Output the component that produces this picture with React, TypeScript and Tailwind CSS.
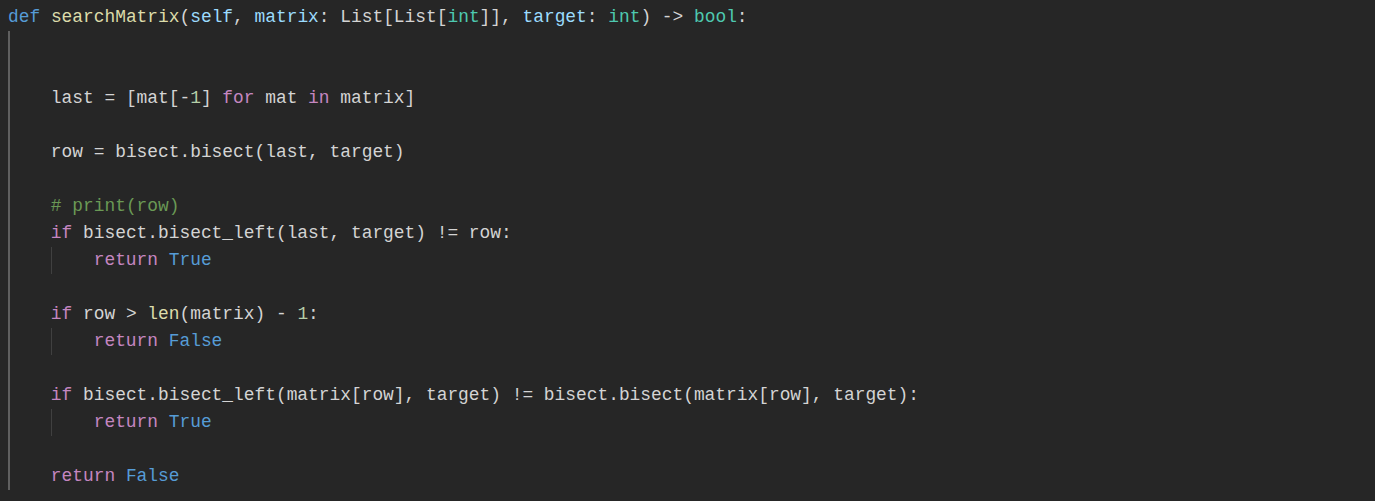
import React from 'react'

type Tok = [string, string]

const C = {
  txt: 'text-[#d4d4d4]',
  kw: 'text-[#c586c0]',
  blue: 'text-[#569cd6]',
  fn: 'text-[#dcdcaa]',
  param: 'text-[#9cdcfe]',
  type: 'text-[#4ec9b0]',
  num: 'text-[#b5cea8]',
  cmt: 'text-[#6a9955]',
}

// indent = number of 4-space levels before the tokens
const lines: { indent: number; toks: Tok[] }[] = [
  {
    indent: 0,
    toks: [
      ['def', C.blue],
      [' ', C.txt],
      ['searchMatrix', C.fn],
      ['(', C.txt],
      ['self', C.param],
      [', ', C.txt],
      ['matrix', C.param],
      [': List[', C.txt],
      ['List', C.txt],
      ['[', C.txt],
      ['int', C.type],
      [']], ', C.txt],
      ['target', C.param],
      [': ', C.txt],
      ['int', C.type],
      [') -> ', C.txt],
      ['bool', C.type],
      [':', C.txt],
    ],
  },
  { indent: 1, toks: [] },
  { indent: 1, toks: [] },
  {
    indent: 1,
    toks: [
      ['last = [mat[-', C.txt],
      ['1', C.num],
      ['] ', C.txt],
      ['for', C.kw],
      [' mat ', C.txt],
      ['in', C.kw],
      [' matrix]', C.txt],
    ],
  },
  { indent: 1, toks: [] },
  { indent: 1, toks: [['row = bisect.bisect(last, target)', C.txt]] },
  { indent: 1, toks: [] },
  { indent: 1, toks: [['# print(row)', C.cmt]] },
  {
    indent: 1,
    toks: [
      ['if', C.kw],
      [' bisect.bisect_left(last, target) != row:', C.txt],
    ],
  },
  {
    indent: 2,
    toks: [
      ['return', C.kw],
      [' ', C.txt],
      ['True', C.blue],
    ],
  },
  { indent: 1, toks: [] },
  {
    indent: 1,
    toks: [
      ['if', C.kw],
      [' row > ', C.txt],
      ['len', C.fn],
      ['(matrix) - ', C.txt],
      ['1', C.num],
      [':', C.txt],
    ],
  },
  {
    indent: 2,
    toks: [
      ['return', C.kw],
      [' ', C.txt],
      ['False', C.blue],
    ],
  },
  { indent: 1, toks: [] },
  {
    indent: 1,
    toks: [
      ['if', C.kw],
      [' bisect.bisect_left(matrix[row], target) != bisect.bisect(matrix[row], target):', C.txt],
    ],
  },
  {
    indent: 2,
    toks: [
      ['return', C.kw],
      [' ', C.txt],
      ['True', C.blue],
    ],
  },
  { indent: 1, toks: [] },
  {
    indent: 1,
    toks: [
      ['return', C.kw],
      [' ', C.txt],
      ['False', C.blue],
    ],
  },
]

function CodeLine({ indent, toks }: { indent: number; toks: Tok[] }) {
  return (
    <div className="flex h-[27.06px] leading-[27.06px] whitespace-pre">
      {indent >= 1 && <span className="inline-block h-full w-[4ch] shrink-0 border-l-2 border-[#5f5f5f]" />}
      {indent >= 2 && toks.length > 0 && (
        <span className="inline-block h-full w-[4ch] shrink-0 border-l border-[#404040]" />
      )}
      <span>
        {toks.map(([t, cls], i) => (
          <span key={i} className={cls}>
            {t}
          </span>
        ))}
      </span>
    </div>
  )
}

export default function App() {
  return (
    <div className="min-h-screen w-full bg-[#262626] pl-[8px] pt-[3.5px] font-['Liberation_Mono',monospace] text-[17.87px] text-[#d4d4d4]">
      {lines.map((l, i) => (
        <CodeLine key={i} indent={l.indent} toks={l.toks} />
      ))}
    </div>
  )
}
